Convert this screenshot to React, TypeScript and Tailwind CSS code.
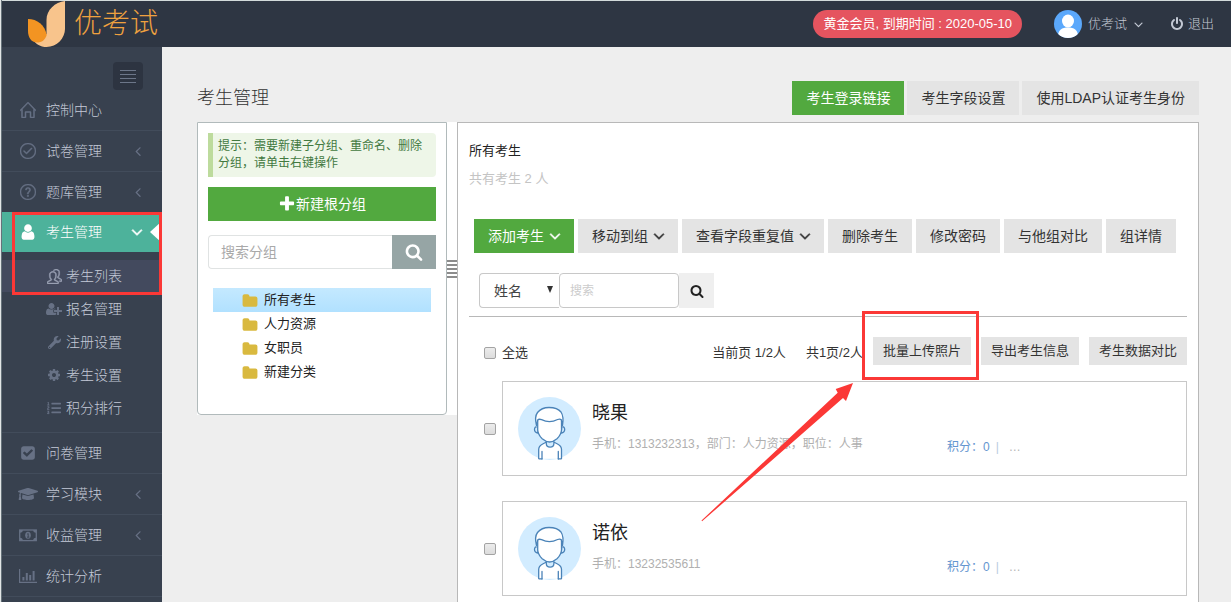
import type { ComponentType, ReactNode } from "react";
import { FaWrench, FaListOl, FaGraduationCap } from "react-icons/fa";
import { SlHome, SlCheck, SlQuestion, SlPeople } from "react-icons/sl";

type IconProps = { className?: string };
type Icon = ComponentType<IconProps>;

function glyph(d: string, viewBox = "0 0 1792 1792"): Icon {
  return function Glyph({ className }: IconProps) {
    return (
      <svg viewBox={viewBox} fill="currentColor" className={className} aria-hidden="true">
        <path d={d} />
      </svg>
    );
  };
}

const Search = glyph("M1216 832q0-185-131.5-316.5t-316.5-131.5-316.5 131.5-131.5 316.5 131.5 316.5 316.5 131.5 316.5-131.5 131.5-316.5zm512 832q0 52-38 90t-90 38q-54 0-90-38l-343-342q-179 124-399 124-143 0-273.5-55.5t-225-150-150-225-55.5-273.5 55.5-273.5 150-225 225-150 273.5-55.5 273.5 55.5 225 150 150 225 55.5 273.5q0 220-124 399l343 343q37 37 37 90z");
const User = glyph("M1536 1399q0 109-62.5 187t-150.5 78h-854q-88 0-150.5-78t-62.5-187q0-85 8.5-160.5t31.5-152 58.5-131 94-89 134.5-34.5q131 128 313 128t313-128q76 0 134.5 34.5t94 89 58.5 131 31.5 152 8.5 160.5zm-256-887q0 159-112.5 271.5t-271.5 112.5-271.5-112.5-112.5-271.5 112.5-271.5 271.5-112.5 271.5 112.5 112.5 271.5z");
const UserPlus = glyph(
  "M704 896q-159 0-271.5-112.5t-112.5-271.5 112.5-271.5 271.5-112.5 271.5 112.5 112.5 271.5-112.5 271.5-271.5 112.5zm960 128h352q13 0 22.5 9.5t9.5 22.5v192q0 13-9.5 22.5t-22.5 9.5h-352v352q0 13-9.5 22.5t-22.5 9.5h-192q-13 0-22.5-9.5t-9.5-22.5v-352h-352q-13 0-22.5-9.5t-9.5-22.5v-192q0-13 9.5-22.5t22.5-9.5h352v-352q0-13 9.5-22.5t22.5-9.5h192q13 0 22.5 9.5t9.5 22.5v352zm-736 224q0 52 38 90t90 38h256v238q-68 50-171 50h-874q-121 0-194-69t-73-190q0-53 3.5-103.5t14-109 26.5-108.5 43-97.5 62-81 85.5-53.5 111.5-20q19 0 39 17 79 61 154.5 91.5t164.5 30.5 164.5-30.5 154.5-91.5q20-17 39-17 132 0 217 96h-223q-52 0-90 38t-38 90v192z",
  "0 0 2048 1792",
);
const AngleDown = glyph("M1395 736q0 13-10 23l-466 466q-10 10-23 10t-23-10l-466-466q-10-10-10-23t10-23l50-50q10-10 23-10t23 10l393 393 393-393q10-10 23-10t23 10l50 50q10 10 10 23z");
const AngleLeft = glyph("M1203 544q0 13-10 23l-393 393 393 393q10 10 10 23t-10 23l-50 50q-10 10-23 10t-23-10l-466-466q-10-10-10-23t10-23l466-466q10-10 23-10t23 10l50 50q10 10 10 23z");
const Plus = glyph("M1600 736v192q0 40-28 68t-68 28h-416v416q0 40-28 68t-68 28h-192q-40 0-68-28t-28-68v-416h-416q-40 0-68-28t-28-68v-192q0-40 28-68t68-28h416v-416q0-40 28-68t68-28h192q40 0 68 28t28 68v416h416q40 0 68 28t28 68z");
const Folder = glyph("M1728 608v704q0 92-66 158t-158 66h-1216q-92 0-158-66t-66-158v-960q0-92 66-158t158-66h320q92 0 158 66t66 158v32h672q92 0 158 66t66 158z");
const Power = glyph("M1664 896q0 156-61 298t-164 245-245 164-298 61-298-61-245-164-164-245-61-298q0-182 80.5-343t226.5-270q43-32 95.5-25t83.5 50q32 42 24.5 94.5t-49.5 84.5q-98 74-151.5 181t-53.5 228q0 104 40.5 198.5t109.5 163.5 163.5 109.5 198.5 40.5 198.5-40.5 163.5-109.5 109.5-163.5 40.5-198.5q0-121-53.5-228t-151.5-181q-42-32-49.5-84.5t24.5-94.5q31-43 84-50t95 25q146 109 226.5 270t80.5 343zm-640-768v640q0 52-38 90t-90 38-90-38-38-90v-640q0-52 38-90t90-38 90 38 38 90z");
const CheckSquare = glyph("M813 1299l614-614q19-19 19-45t-19-45l-102-102q-19-19-45-19t-45 19l-467 467-211-211q-19-19-45-19t-45 19l-102 102q-19 19-19 45t19 45l358 358q19 19 45 19t45-19zm851-883v960q0 119-84.5 203.5t-203.5 84.5h-960q-119 0-203.5-84.5t-84.5-203.5v-960q0-119 84.5-203.5t203.5-84.5h960q119 0 203.5 84.5t84.5 203.5z");
const Cog = glyph("M1152 896q0-106-75-181t-181-75-181 75-75 181 75 181 181 75 181-75 75-181zm512-109v222q0 12-8 23t-20 13l-185 28q-19 54-39 91 35 50 107 138 10 12 10 25t-9 23q-27 37-99 108t-94 71q-12 0-26-9l-138-108q-44 23-91 38-16 136-29 186-7 28-36 28h-222q-14 0-24.5-8.5t-11.5-21.5l-28-184q-49-16-90-37l-141 107q-10 9-25 9-14 0-25-11-126-114-165-168-7-10-7-23 0-12 8-23 15-21 51-66.5t54-70.5q-27-50-41-99l-183-27q-13-2-21-12.5t-8-23.5v-222q0-12 8-23t19-13l186-28q14-46 39-92-40-57-107-138-10-12-10-24 0-10 9-23 26-36 98.5-107.5t94.5-71.5q13 0 26 10l138 107q44-23 91-38 16-136 29-186 7-28 36-28h222q14 0 24.5 8.5t11.5 21.5l28 184q49 16 90 37l142-107q9-9 24-9 13 0 25 10 129 119 165 170 7 8 7 22 0 12-8 23-15 21-51 66.5t-54 70.5q26 50 41 98l183 28q13 2 21 12.5t8 23.5z");

function Money({ className }: IconProps) {
  return (
    <svg viewBox="0 0 18 18" fill="none" stroke="currentColor" className={className} aria-hidden="true">
      <rect x="0.7" y="4" width="16.6" height="10.6" strokeWidth="1.3" />
      <path d="M1 4h2.8A2.8 2.8 0 0 1 1 6.8zM17 4h-2.8A2.8 2.8 0 0 0 17 6.8zM1 14.6h2.8A2.8 2.8 0 0 0 1 11.8zM17 14.6h-2.8a2.8 2.8 0 0 1 2.8-2.8z" fill="currentColor" stroke="none" />
      <ellipse cx="9" cy="9.3" rx="2.8" ry="3.5" fill="currentColor" stroke="none" />
      <path d="M8.2 8.2l1-.7v3.6M8 11.2h2.4" stroke="#38414f" strokeWidth="0.9" />
    </svg>
  );
}

function BarChart({ className }: IconProps) {
  return (
    <svg viewBox="0 0 18 18" fill="currentColor" className={className} aria-hidden="true">
      <path d="M0 2h1.2v12.8H18V16H0zM3.4 10h2v3.6h-2zM6.8 6h2v7.6h-2zM10.2 8h2v5.6h-2zM13.6 4h2v9.6h-2z" />
    </svg>
  );
}

type Item = { label: string; icon: Icon; size: string; arrow?: boolean };

const topItems: Item[] = [
  { label: "控制中心", icon: SlHome, size: "size-4 shrink-0 stroke-current stroke-[32]" },
  { label: "试卷管理", icon: SlCheck, size: "size-4 shrink-0 stroke-current stroke-[32]", arrow: true },
  { label: "题库管理", icon: SlQuestion, size: "size-4 shrink-0 stroke-current stroke-[32]", arrow: true },
];
const bottomItems: Item[] = [
  { label: "问卷管理", icon: CheckSquare, size: "size-4 shrink-0" },
  { label: "学习模块", icon: FaGraduationCap, size: "size-5 shrink-0", arrow: true },
  { label: "收益管理", icon: Money, size: "size-[18px] shrink-0", arrow: true },
  { label: "统计分析", icon: BarChart, size: "size-[18px] shrink-0" },
];
const subItems: Item[] = [
  { label: "考生列表", icon: SlPeople, size: "size-[15px] shrink-0 stroke-current stroke-[32]" },
  { label: "报名管理", icon: UserPlus, size: "size-4 shrink-0" },
  { label: "注册设置", icon: FaWrench, size: "size-[13px] shrink-0" },
  { label: "考生设置", icon: Cog, size: "size-[14px] shrink-0" },
  { label: "积分排行", icon: FaListOl, size: "size-[14px] shrink-0" },
];

function MenuRow({ item }: { item: Item }) {
  const I = item.icon;
  return (
    <li className="border-b border-[#424c5b]">
      <a href="#" className="flex h-10 items-center pr-4 pl-4">
        <span className="flex w-5 justify-center text-[#677185]">
          <I className={item.size} />
        </span>
        <span className="ml-2 flex-1">{item.label}</span>
        {item.arrow && <AngleLeft className="size-4 text-[#677185]" />}
      </a>
    </li>
  );
}

function Sidebar() {
  return (
    <nav aria-label="主菜单" className="w-40 shrink-0 bg-[#38414f] text-sm font-light text-[#c4cad8]">
      <div className="flex justify-end pt-[15px] pr-[19px]">
        <button aria-label="收起菜单" className="flex h-7 w-[30px] flex-col items-center justify-center gap-[3px] rounded bg-[#2d3441]">
          <span className="h-px w-4 bg-[#6c7689]" />
          <span className="h-px w-4 bg-[#6c7689]" />
          <span className="h-px w-4 bg-[#6c7689]" />
          <span className="h-px w-4 bg-[#6c7689]" />
        </button>
      </div>
      <ul>
        {topItems.map((i) => (
          <MenuRow key={i.label} item={i} />
        ))}
        <li className="relative -mt-px border-b border-[#424c5b] pb-2">
          <a href="#" className="flex h-10 items-center bg-[#4db29b] pl-4 text-white">
            <span className="flex w-5 justify-center">
              <User className="size-[18px]" />
            </span>
            <span className="ml-2 flex-1">考生管理</span>
            <AngleDown className="mr-1 size-[18px] stroke-current stroke-[60]" />
            <svg viewBox="0 0 12 22" className="h-[22px] w-3 fill-white" aria-hidden="true">
              <path d="M12 0v22L0 11z" />
            </svg>
          </a>
          <ul className="flex flex-col gap-px pt-2">
            {subItems.map(({ label, icon: I, size }, n) => (
              <li key={label}>
                <a href="#" className={n === 0 ? "flex h-8 items-center bg-[#434a5e] pl-11" : "flex h-8 items-center pl-11"}>
                  <span className={n === 0 ? "flex w-4 justify-center text-[#9aa1b3]" : "flex w-4 justify-center text-[#677185]"}>
                    <I className={size} />
                  </span>
                  <span className="ml-1">{label}</span>
                </a>
              </li>
            ))}
          </ul>
          <span className="pointer-events-none absolute top-0 right-0 left-[10px] h-[83px] border-[3px] border-[#fb3836]" />
        </li>
        {bottomItems.map((i) => (
          <MenuRow key={i.label} item={i} />
        ))}
      </ul>
    </nav>
  );
}

function Header() {
  return (
    <header className="flex h-[47px] items-center justify-between border-t border-[#d3dbdb] bg-[#2e3643] pr-[17px]">
      <a href="#" className="flex items-center pl-[26px]">
        <svg viewBox="0 0 38 46" className="h-[46px] w-[38px]" aria-hidden="true">
          <path d="M37 0C27 1 18.500 9 18.500 19v14L6 40c3 4 8 6 12.500 6C29 46 37 37 37 28z" fill="#f8c48c" />
          <path d="M0 18c9 0 17 6 18.700 16-1.500 5-5 7.500-9.700 7.500C3 41.500 0 36 0 30z" fill="#f39422" />
        </svg>
        <span className="ml-2 text-[28px] leading-8 font-light text-[#efa13f]">优考试</span>
      </a>
      <div className="flex items-center text-[13px] text-[#c3c9d4]">
        <span className="rounded-full bg-[#e5545f] px-[10px] py-1 leading-5 text-white">黄金会员, 到期时间 : 2020-05-10</span>
        <button className="ml-8 flex items-center font-light">
          <svg viewBox="0 0 28 28" className="size-7" aria-hidden="true">
            <clipPath id="head">
              <circle cx="14" cy="14" r="14" />
            </clipPath>
            <g clipPath="url(#head)">
              <rect width="28" height="28" fill="#5ba8fb" />
              <ellipse cx="14" cy="11" rx="6" ry="6.5" fill="#fff" />
              <path d="M4 26c0-6 4-8.500 10-8.500S24 20 24 26v4H4z" fill="#fff" />
            </g>
          </svg>
          <span className="ml-1.5">优考试</span>
          <AngleDown className="ml-1 size-[15px]" />
        </button>
        <button className="ml-6 flex items-center font-light">
          <Power className="size-[14px]" />
          <span className="ml-1">退出</span>
        </button>
      </div>
    </header>
  );
}

function Btn({ children, primary }: { children: ReactNode; primary?: boolean }) {
  return (
    <button
      className={
        primary
          ? "flex h-[34px] items-center gap-0.5 bg-[#52a93f] px-[14px] text-sm whitespace-nowrap text-white"
          : "flex h-[34px] items-center gap-0.5 bg-[#e4e4e4] px-[14px] text-sm whitespace-nowrap text-[#333]"
      }
    >
      {children}
    </button>
  );
}

function DropArrow() {
  return <AngleDown className="-mr-1 size-[18px] stroke-current stroke-[50]" />;
}

function SmallBtn({ children }: { children: ReactNode }) {
  return <button className="h-7 bg-[#e4e4e4] px-[10px] text-[13px] whitespace-nowrap text-[#333]">{children}</button>;
}

const groups = ["所有考生", "人力资源", "女职员", "新建分类"];

function GroupPanel() {
  return (
    <section className="w-[250px] shrink-0 rounded-b border border-[#b1babb] bg-white px-[10px] pt-[10px] pb-[30px]">
      <p className="rounded-r border-l-[5px] border-[#bddb9d] bg-[#eef6e8] py-[5px] pr-2 pl-[5px] text-xs leading-[17px] text-[#42793f]">
        提示：需要新建子分组、重命名、删除分组，请单击右键操作
      </p>
      <button className="mt-[10px] flex h-[34px] w-full items-center justify-center bg-[#52a93f] text-sm text-white">
        <Plus className="size-[18px]" />
        新建根分组
      </button>
      <form className="mt-[14px] flex h-[34px]">
        <input
          aria-label="搜索分组"
          placeholder="搜索分组"
          className="min-w-0 flex-1 rounded-l border border-r-0 border-[#e0e3e3] px-3 text-sm outline-none placeholder:text-[#a9a9a9]"
        />
        <button type="button" aria-label="搜索" className="flex w-11 items-center justify-center bg-[#96a5a5] text-white">
          <Search className="size-[18px]" />
        </button>
      </form>
      <ul className="mt-[19px] px-[5px] text-[13px] leading-[22px] text-[#222]">
        {groups.map((g, n) => (
          <li key={g}>
            <a
              href="#"
              className={
                n === 0
                  ? "flex h-6 items-center bg-linear-to-b from-[#c4e9ff] to-[#b1e1ff] pl-[29px]"
                  : "flex h-6 items-center pl-[29px]"
              }
            >
              <Folder className="mt-px size-4 text-[#d9b93f]" />
              <span className="ml-1.5">{g}</span>
            </a>
          </li>
        ))}
      </ul>
    </section>
  );
}

function Avatar() {
  return (
    <svg viewBox="0 0 63 63" className="size-[63px] shrink-0" aria-hidden="true">
      <circle cx="31.500" cy="31.500" r="31.500" fill="#d2ecff" />
      <g fill="none" stroke="#4a83b8" strokeWidth="1.300" strokeLinejoin="round" strokeLinecap="round">
        <path d="M20.700 61.800V52.500q0-4.500 4.500-6l3.300-1.500h7l3.300 1.500q4.500 1.500 4.500 6v9.300z" fill="#fff" stroke="none" />
        <path d="M24 62v-7.500M40.300 62v-7.500" />
        <path d="M20.700 61.500V52.500q0-3.500 4-5.500l3.800-2M24 61.800h-3M43.500 61.500V52.500q0-3.500-4-5.500l-3.800-2M40.300 61.800h3" />
        <path d="M28.300 45v1.500q0 3.700 3.800 3.700t3.800-3.700V45" fill="#d2ecff" />
        <path d="M19.500 29.800q-3-.5-3 2.700 0 3 3.500 3.500zM43.700 29.800q3-.5 3 2.700 0 3-3.500 3.500z" fill="#d2ecff" />
        <path
          d="M18.300 28.500q-2.300-8.500 1-13 4-5 11.700-5 8.500 0 12 4.500 3.200 4.500 1.500 13.500L43.700 33q-.5 5-4.500 8.700-4 3.300-7.600 3.300T24 41.700q-4-3.700-4.500-8.700z"
          fill="#fff"
          stroke="none"
        />
        <path d="M19.700 24v9q.5 5 4.500 8.700 4 3.300 7.400 3.300t7.400-3.300q4-3.700 4.500-8.700v-9" />
        <path d="M18.500 28.500q-2.300-8.500 1-13 4-5 11.500-5 8.500 0 12 4.500 3 4.500 1.500 13.500l-1.200-5.700q-1.200-1.300-3.700-.3-8 4.300-16 .2-2.700-1-3.900.3z" fill="#fff" />
      </g>
    </svg>
  );
}

const boxClass =
  "size-3 shrink-0 appearance-none rounded-[2px] border border-[#a3a3a3] bg-linear-to-b from-[#ececec] to-[#dcdcdc] checked:bg-[#5c9bd1]";

function Student({ name, detail }: { name: string; detail: string }) {
  return (
    <li className="flex items-center gap-[6px] pl-[15px]">
      <input type="checkbox" aria-label={name} className={boxClass} />
      <article className="flex h-[95px] min-w-0 flex-1 items-start border border-[#c8c8c8] px-[15px] pt-[15px]">
        <Avatar />
        <div className="mt-0.5 ml-[11px] w-[355px]">
          <h3 className="text-lg leading-7 text-[#222]">{name}</h3>
          <p className="mt-2 text-xs leading-[18px] text-[#b0b0b0]">{detail}</p>
        </div>
        <p className="mt-[41px] flex gap-1.5 text-xs leading-[18px] text-[#6496d0]">
          <a href="#">积分：0</a>
          <span className="text-[#b8cbe0]">|</span>
          <a href="#" className="ml-1 text-[#b5b5b5]">…</a>
        </p>
      </article>
    </li>
  );
}

function StudentPanel() {
  return (
    <section className="min-w-0 flex-1 border border-b-0 border-[#b8b8b8] bg-white px-[11px] pt-[18px] pb-1.5">
      <h2 className="text-[13px] leading-5 text-[#222]">所有考生</h2>
      <p className="mt-2 text-[13px] leading-5 text-[#c4c4c4]">共有考生 2 人</p>
      <div className="mt-[30px] flex gap-1 pl-[5px]">
        <Btn primary>
          添加考生
          <DropArrow />
        </Btn>
        <Btn>
          移动到组
          <DropArrow />
        </Btn>
        <Btn>
          查看字段重复值
          <DropArrow />
        </Btn>
        <Btn>删除考生</Btn>
        <Btn>修改密码</Btn>
        <Btn>与他组对比</Btn>
        <Btn>组详情</Btn>
      </div>
      <form className="ml-[10px] mt-5 flex h-[35px]">
        <span className="relative flex w-20">
          <select
            aria-label="搜索字段"
            className="w-full appearance-none rounded-l border border-r-0 border-[#c8c8c8] bg-white px-[14px] text-sm text-[#444] outline-none"
          >
            <option>姓名</option>
          </select>
          <svg viewBox="0 0 6 7" className="pointer-events-none absolute top-[13px] right-1.5 h-[7px] w-1.5 fill-[#333]" aria-hidden="true">
            <path d="M0 0h6L3 7z" />
          </svg>
        </span>
        <input
          aria-label="搜索"
          placeholder="搜索"
          className="w-[120px] rounded border border-[#c8c8c8] px-[10px] text-xs outline-none placeholder:text-[#ccc]"
        />
        <button type="button" aria-label="搜索考生" className="flex w-[35px] items-center justify-center bg-[#efefef] text-[#222]">
          <Search className="size-[14px]" />
        </button>
      </form>
      <div className="mt-2 flex items-start border-t border-[#b8b8b8] pt-5 pl-[15px] text-[13px] text-[#333]">
        <label className="flex h-8 items-center gap-1.5">
          <input type="checkbox" className={boxClass} />
          全选
        </label>
        <span className="ml-auto flex h-8 items-center gap-5 whitespace-nowrap">
          <span>当前页 1/2人</span>
          <span>共1页/2人</span>
        </span>
        <div className="ml-[10px] flex gap-[10px]">
          <div className="relative">
            <SmallBtn>批量上传照片</SmallBtn>
            <span className="pointer-events-none absolute -top-[26px] -left-[11px] z-10 h-[69px] w-[117px] border-[3px] border-[#fb3836]" />
            <svg
              viewBox="0 0 154 140"
              className="pointer-events-none absolute top-[45px] -left-[172px] z-10 h-[140px] w-[154px] max-w-none fill-[#fb3836]"
              aria-hidden="true"
            >
              <path d="M152 1l-17.300 6 2 3.700L.5 138.500l.6.800L142 16l3 3z" />
            </svg>
          </div>
          <SmallBtn>导出考生信息</SmallBtn>
          <SmallBtn>考生数据对比</SmallBtn>
        </div>
      </div>
      <ul className="mt-3 flex flex-col gap-[25px]">
        <Student name="晓果" detail="手机：1313232313，部门：人力资源，职位：人事" />
        <Student name="诺依" detail="手机：13232535611" />
      </ul>
    </section>
  );
}

export default function App() {
  return (
    <div className="flex min-h-screen flex-col border-l border-[#e2e6e6] bg-[#eee] font-['Liberation_Sans','Noto_Sans_CJK_SC',sans-serif]">
      <div className="flex flex-1 flex-col border-l border-[#66727a]">
        <Header />
        <div className="flex flex-1">
          <Sidebar />
          <main className="flex min-w-0 flex-1 flex-col pt-[34px] pr-8 pl-[35px]">
            <div className="flex items-center justify-between">
              <h1 className="text-lg font-light text-[#333]">考生管理</h1>
              <div className="flex gap-[3px]">
                <Btn primary>考生登录链接</Btn>
                <Btn>考生字段设置</Btn>
                <Btn>使用LDAP认证考生身份</Btn>
              </div>
            </div>
            <div className="mt-[7px] flex flex-1 items-stretch">
              <div className="flex self-start bg-white">
                <GroupPanel />
                <div className="flex w-[10px] items-center">
                  <svg viewBox="0 0 10 18" className="h-[18px] w-[10px] fill-[#8c8c8c]" aria-hidden="true">
                    <path d="M0 0h10v2H0zM0 4h10v2H0zM0 8h10v2H0zM0 12h10v2H0zM0 16h10v2H0z" />
                  </svg>
                </div>
              </div>
              <StudentPanel />
            </div>
          </main>
        </div>
      </div>
    </div>
  );
}
